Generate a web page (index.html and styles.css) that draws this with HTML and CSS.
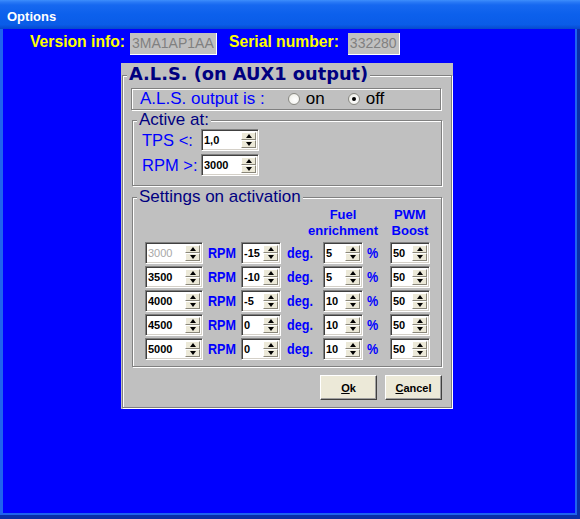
FILE: index.html
```html
<!DOCTYPE html>
<html>
<head>
<meta charset="utf-8">
<title>Options</title>
<link rel="stylesheet" href="styles.css">
</head>
<body>
<div class="window">
  <div class="titlebar">Options</div>
  <div class="client">
    <div class="info-row">
      <span class="info-label">Version info:</span>
      <span class="info-box ver">3MA1AP1AA</span>
      <span class="info-label serial">Serial number:</span>
      <span class="info-box ser">332280</span>
    </div>
    <div class="panel">
      <div class="etched outer">
        <div class="legend big">A.L.S. (on AUX1 output)</div>
        <div class="etched output-box">
          <span class="out-label">A.L.S. output is :</span>
          <span class="radio first"></span><span class="radio-text">on</span>
          <span class="radio second checked"></span><span class="radio-text">off</span>
        </div>
        <div class="etched group active">
          <div class="legend">Active at:</div>
          <div class="active-grid">
            <span class="blue-label">TPS &lt;:</span>
            <div class="spin w58"><span class="val">1,0</span><span class="spin-btns"><span class="up"></span><span class="dn"></span></span></div>
            <span class="blue-label">RPM &gt;:</span>
            <div class="spin w58"><span class="val">3000</span><span class="spin-btns"><span class="up"></span><span class="dn"></span></span></div>
          </div>
        </div>
        <div class="etched group settings">
          <div class="legend">Settings on activation</div>
          <div class="settings-head">
            <div class="head c5">Fuel<br>enrichment</div>
            <div class="head c7">PWM<br>Boost</div>
          </div>
          <div class="settings-grid">
            <div class="spin w58"><span class="val disabled">3000</span><span class="spin-btns"><span class="up"></span><span class="dn"></span></span></div>
            <span class="unit u-rpm"><span class="sq">RPM</span></span>
            <div class="spin w40"><span class="val">-15</span><span class="spin-btns"><span class="up"></span><span class="dn"></span></span></div>
            <span class="unit u-deg"><span class="sq">deg.</span></span>
            <div class="spin w40"><span class="val">5</span><span class="spin-btns"><span class="up"></span><span class="dn"></span></span></div>
            <span class="unit u-pct"><span class="sq">%</span></span>
            <div class="spin w40"><span class="val">50</span><span class="spin-btns"><span class="up"></span><span class="dn"></span></span></div>

            <div class="spin w58"><span class="val">3500</span><span class="spin-btns"><span class="up"></span><span class="dn"></span></span></div>
            <span class="unit u-rpm"><span class="sq">RPM</span></span>
            <div class="spin w40"><span class="val">-10</span><span class="spin-btns"><span class="up"></span><span class="dn"></span></span></div>
            <span class="unit u-deg"><span class="sq">deg.</span></span>
            <div class="spin w40"><span class="val">5</span><span class="spin-btns"><span class="up"></span><span class="dn"></span></span></div>
            <span class="unit u-pct"><span class="sq">%</span></span>
            <div class="spin w40"><span class="val">50</span><span class="spin-btns"><span class="up"></span><span class="dn"></span></span></div>

            <div class="spin w58"><span class="val">4000</span><span class="spin-btns"><span class="up"></span><span class="dn"></span></span></div>
            <span class="unit u-rpm"><span class="sq">RPM</span></span>
            <div class="spin w40"><span class="val">-5</span><span class="spin-btns"><span class="up"></span><span class="dn"></span></span></div>
            <span class="unit u-deg"><span class="sq">deg.</span></span>
            <div class="spin w40"><span class="val">10</span><span class="spin-btns"><span class="up"></span><span class="dn"></span></span></div>
            <span class="unit u-pct"><span class="sq">%</span></span>
            <div class="spin w40"><span class="val">50</span><span class="spin-btns"><span class="up"></span><span class="dn"></span></span></div>

            <div class="spin w58"><span class="val">4500</span><span class="spin-btns"><span class="up"></span><span class="dn"></span></span></div>
            <span class="unit u-rpm"><span class="sq">RPM</span></span>
            <div class="spin w40"><span class="val">0</span><span class="spin-btns"><span class="up"></span><span class="dn"></span></span></div>
            <span class="unit u-deg"><span class="sq">deg.</span></span>
            <div class="spin w40"><span class="val">10</span><span class="spin-btns"><span class="up"></span><span class="dn"></span></span></div>
            <span class="unit u-pct"><span class="sq">%</span></span>
            <div class="spin w40"><span class="val">50</span><span class="spin-btns"><span class="up"></span><span class="dn"></span></span></div>

            <div class="spin w58"><span class="val">5000</span><span class="spin-btns"><span class="up"></span><span class="dn"></span></span></div>
            <span class="unit u-rpm"><span class="sq">RPM</span></span>
            <div class="spin w40"><span class="val">0</span><span class="spin-btns"><span class="up"></span><span class="dn"></span></span></div>
            <span class="unit u-deg"><span class="sq">deg.</span></span>
            <div class="spin w40"><span class="val">10</span><span class="spin-btns"><span class="up"></span><span class="dn"></span></span></div>
            <span class="unit u-pct"><span class="sq">%</span></span>
            <div class="spin w40"><span class="val">50</span><span class="spin-btns"><span class="up"></span><span class="dn"></span></span></div>
          </div>
        </div>
        <div class="buttons">
          <button class="btn"><u>O</u>k</button>
          <button class="btn"><u>C</u>ancel</button>
        </div>
      </div>
    </div>
  </div>
</div>
</body>
</html>
```

FILE: styles.css
```css
* { box-sizing: border-box; }
html, body { margin: 0; padding: 0; }
body {
  width: 580px;
  height: 519px;
  overflow: hidden;
  font-family: "Liberation Sans", Arial, sans-serif;
  background: #0028a8;
}
.window {
  width: 580px;
  height: 519px;
  display: flex;
  flex-direction: column;
  background: #0a2ea8;
}
.titlebar {
  height: 29px;
  flex: none;
  padding: 4px 0 0 7px;
  line-height: 25px;
  color: #fff;
  font-weight: bold;
  font-size: 13px;
  background: linear-gradient(#3d8ffc 0, #2a7af6 2px, #1668f0 5px, #0c60ec 50%, #0a5ce8 85%, #0748cc 100%);
}
.client {
  flex: 1;
  background: #0000ff;
  margin: 0 3px 4px 0;
  border-left: 3px solid #1f63ee;
  border-right: 2px solid #1f63ee;
  border-bottom: 2px solid #1f63ee;
  display: flex;
  flex-direction: column;
  align-items: flex-start;
}
.info-row {
  display: flex;
  align-items: flex-start;
  margin: 4px 0 0 27px;
}
.info-label {
  color: #ffff00;
  font-weight: bold;
  font-size: 15.7px;
  line-height: 17px;
}
.info-label.serial { margin-left: 12px; }
.info-box {
  height: 22px;
  line-height: 20px;
  background: #c0c0c0;
  color: #808080;
  font-size: 14px;
  padding-left: 2px;
  border-right: 1px solid #ffffff;
  border-bottom: 1px solid #ffffff;
}
.info-box.ver { width: 87px; margin-left: 5px; }
.info-box.ser { width: 52px; margin-left: 9px; }

.panel {
  margin: 8px 0 0 118px;
  width: 332px;
  height: 346px;
  background: #c0c0c0;
  padding: 12px 1px 1px 1px;
}
.etched {
  position: relative;
  border: 1px solid #808080;
  box-shadow: inset 1px 1px 0 #ffffff, 1px 1px 0 #ffffff;
}
.outer {
  width: 330px;
  height: 333px;
  padding: 12px 0 0 0;
  display: flex;
  flex-direction: column;
  align-items: flex-start;
}
.legend {
  position: absolute;
  left: 4px;
  top: -10px;
  padding: 0 2px;
  background: #c0c0c0;
  color: #000080;
  font-size: 17px;
  line-height: 18px;
}
.legend.big {
  top: -13px;
  left: 4px;
  font-family: "DejaVu Sans", Verdana, sans-serif;
  font-size: 17.8px;
  line-height: 22px;
  font-weight: bold;
}
.output-box {
  margin-left: 8px;
  width: 310px;
  height: 22px;
  display: flex;
  align-items: center;
  padding-left: 8px;
}
.out-label {
  color: #0000ff;
  font-size: 17px;
  line-height: 18px;
}
.blue-label {
  color: #0000ff;
  font-size: 16.5px;
  line-height: 18px;
}
.radio {
  width: 12px;
  height: 12px;
  border-radius: 50%;
  background: radial-gradient(circle at 60% 60%, #ffffff 0, #f4f4f0 55%, #dcdcd4 100%);
  border: 1px solid #8a8a84;
  display: flex;
  align-items: center;
  justify-content: center;
}
.radio.first { margin-left: 23px; }
.radio.second { margin-left: 23px; }
.radio.checked::after {
  content: "";
  width: 4px;
  height: 4px;
  border-radius: 50%;
  background: #000;
}
.radio-text {
  margin-left: 6px;
  font-size: 17px;
  color: #000;
}
.group {
  margin-left: 9px;
  width: 310px;
}
.active {
  margin-top: 10px;
  height: 66px;
  padding: 8px 0 0 9px;
}
.active-grid {
  display: grid;
  grid-template-columns: 59px 58px;
  grid-auto-rows: 22px;
  row-gap: 3px;
  align-items: center;
}
.settings {
  margin-top: 11px;
  height: 170px;
  padding: 9px 0 0 12px;
}
.settings-head,
.settings-grid {
  display: grid;
  grid-template-columns: 58px 38px 40px 42px 40px 27px 40px;
}
.settings-head {
  height: 33px;
  margin-bottom: 2px;
}
.settings-grid {
  grid-auto-rows: 22px;
  row-gap: 2px;
}
.head {
  grid-row: 1;
  justify-self: center;
  width: max-content;
  text-align: center;
  color: #0000ff;
  font-weight: bold;
  font-size: 13px;
  line-height: 16px;
}
.c5 { grid-column: 5; }
.c7 { grid-column: 7; }
.unit {
  align-self: center;
  color: #0000ff;
  font-weight: bold;
  font-size: 15px;
  line-height: 18px;
  white-space: nowrap;
}
.sq {
  display: inline-block;
  transform: scaleX(0.84);
  transform-origin: left center;
}
.u-rpm { padding-left: 5px; }
.u-deg { padding-left: 6px; }
.u-pct { padding-left: 4px; }

.spin {
  display: flex;
  height: 22px;
  background: #ffffff;
  border: 1px solid;
  border-color: #808080 #ffffff #ffffff #808080;
  box-shadow: inset 1px 1px 0 #404040, inset -1px -1px 0 #d4d0c8;
  padding: 2px;
}
.w58 { width: 58px; }
.w40 { width: 40px; }
.val {
  flex: 1;
  font-weight: bold;
  font-size: 11px;
  line-height: 16px;
  color: #000;
  overflow: hidden;
}
.val.disabled { color: #a8a8a8; font-weight: normal; }
.spin-btns {
  width: 15px;
  display: flex;
  flex-direction: column;
}
.up, .dn {
  flex: 1;
  background: #ece9d8;
  border: 1px solid;
  border-color: #ffffff #8a877a #8a877a #ffffff;
  display: flex;
  align-items: center;
  justify-content: center;
}
.up::after {
  content: "";
  border-left: 3px solid transparent;
  border-right: 3px solid transparent;
  border-bottom: 4px solid #000;
}
.dn::after {
  content: "";
  border-left: 3px solid transparent;
  border-right: 3px solid transparent;
  border-top: 4px solid #000;
}
.buttons {
  margin-top: 8px;
  align-self: flex-end;
  margin-right: 9px;
  display: flex;
  gap: 8px;
}
.btn {
  width: 57px;
  height: 25px;
  padding: 0;
  background: #ece9d8;
  border: 1px solid;
  border-color: #ffffff #404040 #404040 #ffffff;
  box-shadow: inset -1px -1px 0 #a0a0a0;
  font-family: "Liberation Sans", Arial, sans-serif;
  font-weight: bold;
  font-size: 11px;
  color: #000;
}
```
